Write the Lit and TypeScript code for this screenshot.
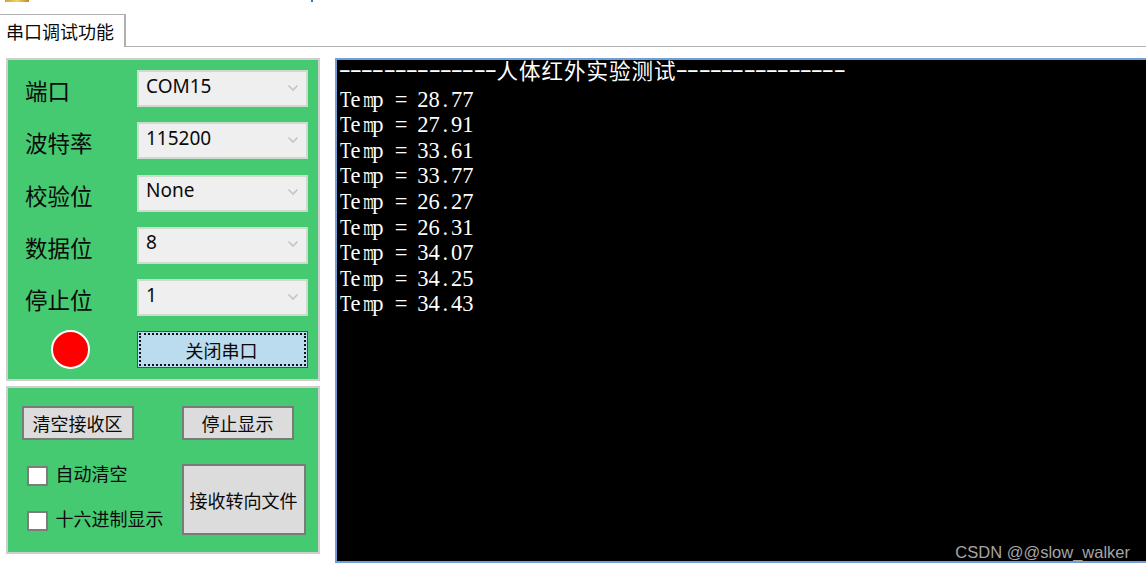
import { LitElement, html, css } from "lit";
import { customElement } from "lit/decorators.js";

const FIELDS: [string, string][] = [
  ["端口", "COM15"],
  ["波特率", "115200"],
  ["校验位", "None"],
  ["数据位", "8"],
  ["停止位", "1"],
];
const TEMPS = ["28.77", "27.91", "33.61", "33.77", "26.27", "26.31", "34.07", "34.25", "34.43"];

@customElement("app-root")
export class AppRoot extends LitElement {
  static styles = css`
    :host { display: block; width: 1146px; height: 573px; overflow: hidden; background: #fff; position: relative;
      font-family: "Noto Sans CJK SC", sans-serif; color: #0a0a0a; }
    .top { height: 14px; position: relative; }
    .logo { position: absolute; left: 5px; top: 0; width: 24px; height: 2px; background: linear-gradient(90deg,#c9a23c,#f3d266,#b98b2c); }
    .dot { position: absolute; left: 311px; top: 0; width: 2px; height: 2px; background: #1f7fd0; }
    .tabbar { height: 32px; border-bottom: 1px solid #b0b0b0; display: flex; }
    .tab { width: 126px; box-sizing: border-box; height: 33px; border: 1px solid #b0b0b0; border-left: none; border-bottom: none;
      border-right-width: 2px; background: #fff; padding-left: 6px; font-size: 18px; line-height: 33px; }
    .main { display: flex; gap: 15px; padding: 11px 0 0 6px; }
    .left { width: 314px; display: flex; flex-direction: column; gap: 5px; flex: none; }
    .panel { box-sizing: border-box; background: #45c971; border: 2px solid #cfcfcf; }
    .p1 { height: 323px; padding: 10px 10px 0 17px; display: flex; flex-direction: column; gap: 15.25px; }
    .row { display: flex; align-items: center; height: 37px; }
    .lbl { width: 112px; font-size: 22.5px; line-height: 30px; padding-top: 3px; flex: none; }
    .sel { box-sizing: border-box; width: 171px; height: 37px; background: #efefef; border: 2px solid #cbdccf;
      display: flex; align-items: center; justify-content: space-between; padding: 0 7px 6px 7px;
      font: 19px "Noto Sans", sans-serif; }
    .sel svg { display: block; margin-top: 4px; }
    .ind { width: 112px; flex: none; }
    .led { box-sizing: border-box; width: 39px; height: 39px; border-radius: 50%; background: #ff0000; border: 2px solid #fff; margin-left: 26px; }
    .close { box-sizing: border-box; width: 171px; height: 37px; background: #bbdcee; border: 1px solid #1f5f74; padding: 1px;
      font-size: 18px; display: flex; }
    .close span { flex: 1; border: 2px dotted #111; display: flex; align-items: center; justify-content: center; padding-right: 2px; }
    .p2 { height: 168px; padding: 18px 0 0 14px; }
    .btn { box-sizing: border-box; background: #dcdcdc; border: 2px solid #7a7a7a; display: flex; align-items: center; justify-content: center; font-size: 18px; padding-right: 1px; }
    .b1 { width: 112px; height: 34px; }
    .btns { display: flex; gap: 48px; }
    .lower { display: flex; margin-top: 24px; }
    .checks { width: 160px; flex: none; padding: 2px 0 0 5px; box-sizing: border-box; display: flex; flex-direction: column; gap: 25px; }
    .chk { display: flex; align-items: center; height: 20px; gap: 7.5px; font-size: 18px; white-space: nowrap; }
    .chk span { padding-bottom: 6px; }
    .box { box-sizing: border-box; width: 21px; height: 20px; background: #fff; border: 2px solid #7c7c7c; flex: none; }
    .big { width: 124px; height: 71px; }
    .term { box-sizing: border-box; flex: 1; height: 505px; background: #000; border: 2px solid #6f9fd6; border-right: none; color: #fff;
      padding: 0 0 0 1.5px; position: relative; font-size: 22.5px; }
    .ln { height: 25.6px; line-height: 25px; white-space: nowrap; display: flex; font-family: "Liberation Serif", serif; }
    .c { display: inline-block; width: 11.25px; text-align: center; flex: none; }
    .nar { transform: scaleX(0.82); }
    .m { transform: scaleX(0.6); }
    .dash { transform: scaleX(1.6); }
    .w { display: inline-block; width: 22.5px; text-align: center; flex: none; font-family: "Noto Sans CJK SC", sans-serif; font-size: 21.5px; }
    .head { height: 26.6px; line-height: 20px; }
    .wm { position: absolute; right: 16px; bottom: -1px; font: 16.5px/20px "Liberation Sans", sans-serif; color: #a6a6a6; }
  `;

  private mono(t: string) {
    return [...t].map((ch) => {
      if (ch.charCodeAt(0) > 255) return html`<span class="w">${ch}</span>`;
      const cls = ch === "m" ? "c m" : ch === "T" ? "c nar" : ch === "-" ? "c dash" : "c";
      return html`<span class=${cls}>${ch === " " ? "\u00a0" : ch}</span>`;
    });
  }

  render() {
    const chev = html`<svg width="12" height="8" viewBox="0 0 12 8" fill="none" stroke="#c4c4c4" stroke-width="1.6"><path d="M1.5 1.5 6 6l4.5-4.5"/></svg>`;
    return html`
      <div class="top"><div class="logo"></div><div class="dot"></div></div>
      <div class="tabbar"><div class="tab">串口调试功能</div></div>
      <div class="main">
        <div class="left">
          <div class="panel p1">
            ${FIELDS.map(([l, v]) => html`
              <div class="row"><div class="lbl">${l}</div><div class="sel"><span>${v}</span>${chev}</div></div>`)}
            <div class="row">
              <div class="ind"><div class="led"></div></div>
              <div class="close"><span>关闭串口</span></div>
            </div>
          </div>
          <div class="panel p2">
            <div class="btns">
              <div class="btn b1">清空接收区</div>
              <div class="btn b1">停止显示</div>
            </div>
            <div class="lower">
              <div class="checks">
                <div class="chk"><div class="box"></div><span>自动清空</span></div>
                <div class="chk"><div class="box"></div><span>十六进制显示</span></div>
              </div>
              <div class="btn big">接收转向文件</div>
            </div>
          </div>
        </div>
        <div class="term">
          <div class="ln head">${this.mono("--------------人体红外实验测试---------------")}</div>
          ${TEMPS.map((t) => html`<div class="ln">${this.mono("Temp = " + t)}</div>`)}
          <div class="wm">CSDN @@slow_walker</div>
        </div>
      </div>
    `;
  }
}
